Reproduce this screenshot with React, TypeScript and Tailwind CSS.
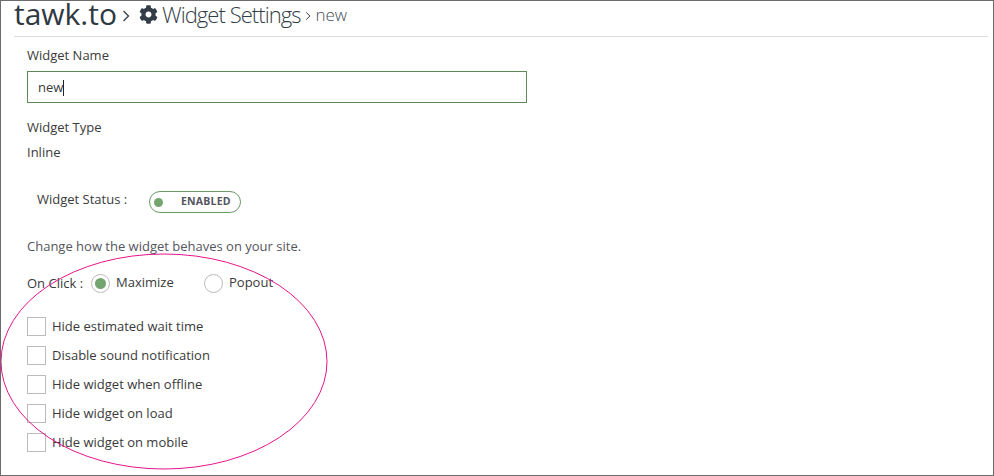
import { FaCog } from 'react-icons/fa';

const OPTIONS = [
  'Hide estimated wait time',
  'Disable sound notification',
  'Hide widget when offline',
  'Hide widget on load',
  'Hide widget on mobile',
];

function Chevron({ className }: { className: string }) {
  return (
    <svg className={className} viewBox="0 0 8 12" fill="none" stroke="#333d47" strokeWidth="1.3">
      <path d="M1.5 1 L6.5 6 L1.5 11" />
    </svg>
  );
}

export default function App() {
  return (
    <div className="relative h-[476px] w-[994px] overflow-hidden border border-[#6b6b6b] bg-white font-['Open_Sans',sans-serif] text-[13px] text-[#3f3f46]">
      {/* Breadcrumb */}
      <div className="ml-[13px] mr-[5px] flex h-[36px] items-center border-b border-[#dddddd] pb-[9px]">
        <span className="text-[30px] leading-[24px] text-[#2f3942]">tawk.to</span>
        <Chevron className="ml-[5px] mt-[4px] h-[12px] w-[8px]" />
        <FaCog className="ml-[9px] mt-[1px] h-[19px] w-[19px] text-[#333d47]" />
        <span className="ml-[4px] text-[22px] font-light leading-[24px] tracking-[-0.95px] text-[#333d47]">Widget Settings</span>
        <Chevron className="ml-[5px] mt-[4px] h-[10px] w-[6px]" />
        <span className="ml-[4px] mt-[2px] text-[17px] font-light leading-[24px] text-[#444c55]">new</span>
      </div>

      <div className="pl-[26px]">
        <div className="mt-[9px] leading-[18px] text-[#3a3a3a]">Widget Name</div>
        <div className="mt-[7px] flex h-[32px] w-[500px] items-center border border-[#5c8a55] pl-[10px] pt-[1px] text-[#3a3a3a]">
          new
          <span className="h-[16px] w-px bg-[#222222]" />
        </div>

        <div className="mt-[15px] leading-[18px] text-[#3a3a3a]">Widget Type</div>
        <div className="mt-[7px] leading-[18px] text-[#3a3a3a]">Inline</div>

        {/* Status toggle */}
        <div className="mt-[29px] flex items-center pl-[10px]">
          <span className="w-[112px] pb-[6px] leading-[18px] text-[#3a3a3a]">Widget Status :</span>
          <div className="flex h-[22px] w-[92px] items-center rounded-full border border-[#6b9a65] pl-[4px]">
            <span className="h-[9px] w-[9px] rounded-full bg-[#74a56e]" />
            <span className="ml-[18px] text-[10.5px] font-bold tracking-[0.2px] text-[#55555e]">ENABLED</span>
          </div>
        </div>

        <div className="mt-[23px] leading-[18px] text-[#55555e]">Change how the widget behaves on your site.</div>

        {/* On click radios */}
        <div className="mt-[18px] flex h-[20px] items-center">
          <span className="w-[64px] leading-[18px] text-[#3a3a3a]">On Click :</span>
          <span className="flex h-[19px] w-[19px] items-center justify-center rounded-full border border-[#bbbbbb]">
            <span className="h-[11px] w-[11px] rounded-full bg-[#74a56e]" />
          </span>
          <span className="ml-[6px] w-[88px] text-[#3a3a3a]">Maximize</span>
          <span className="h-[19px] w-[19px] rounded-full border border-[#bbbbbb]" />
          <span className="ml-[6px] text-[#3a3a3a]">Popout</span>
        </div>

        {/* Options */}
        <div className="mt-[24px] flex flex-col gap-[10px]">
          {OPTIONS.map((label) => (
            <div key={label} className="flex h-[19px] items-center">
              <span className="h-[19px] w-[19px] border border-[#bbbbbb]" />
              <span className="ml-[6px] text-[#3a3a3a]">{label}</span>
            </div>
          ))}
        </div>
      </div>

      {/* Annotation ellipse */}
      <svg className="absolute left-[-1px] top-[-1px] h-[476px] w-[994px]" viewBox="0 0 994 476" fill="none">
        <ellipse cx="164" cy="361.5" rx="163" ry="107.5" stroke="#e6148c" strokeWidth="1" />
      </svg>
    </div>
  );
}
